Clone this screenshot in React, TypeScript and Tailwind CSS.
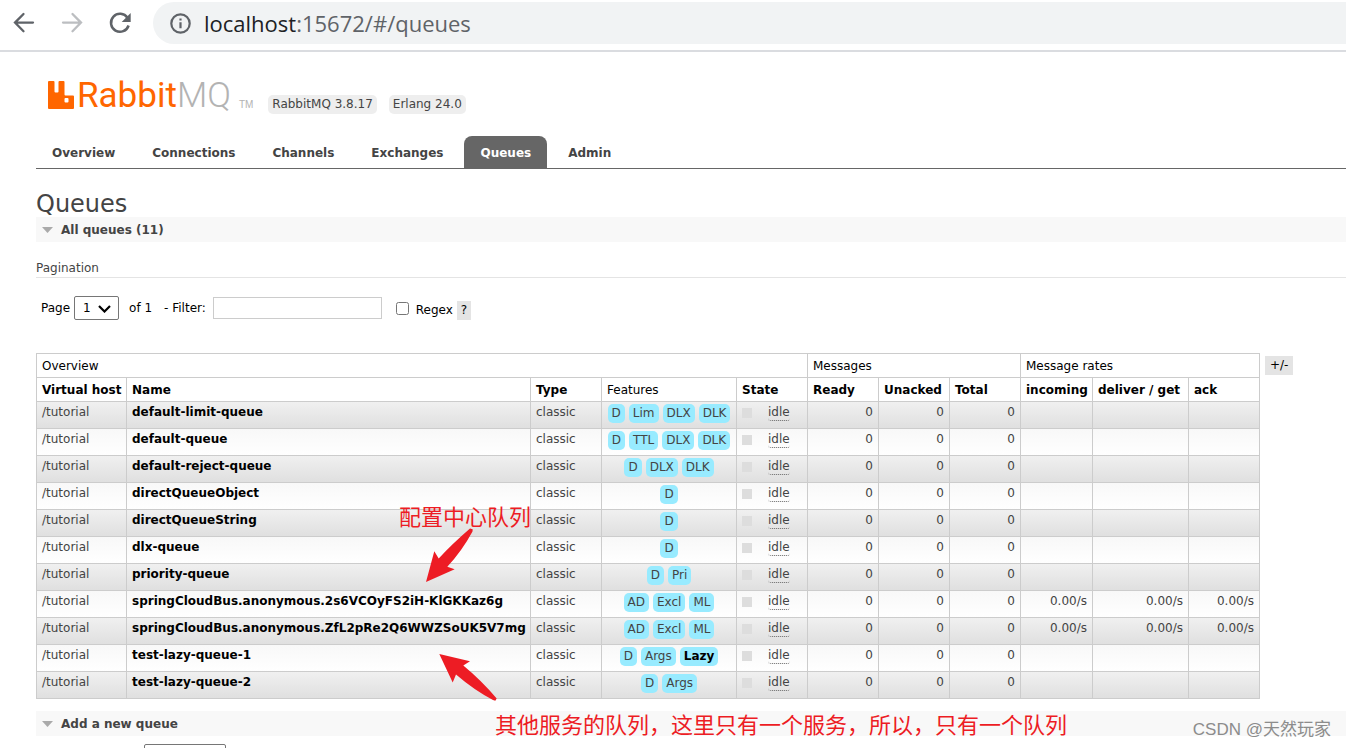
import { useState } from 'react'

interface Queue {
  name: string
  features: string[]
  rate?: string
}

const tabs = ['Overview', 'Connections', 'Channels', 'Exchanges', 'Queues', 'Admin']

const queues: Queue[] = [
  { name: 'default-limit-queue', features: ['D', 'Lim', 'DLX', 'DLK'] },
  { name: 'default-queue', features: ['D', 'TTL', 'DLX', 'DLK'] },
  { name: 'default-reject-queue', features: ['D', 'DLX', 'DLK'] },
  { name: 'directQueueObject', features: ['D'] },
  { name: 'directQueueString', features: ['D'] },
  { name: 'dlx-queue', features: ['D'] },
  { name: 'priority-queue', features: ['D', 'Pri'] },
  { name: 'springCloudBus.anonymous.2s6VCOyFS2iH-KlGKKaz6g', features: ['AD', 'Excl', 'ML'], rate: '0.00/s' },
  { name: 'springCloudBus.anonymous.ZfL2pRe2Q6WWZSoUK5V7mg', features: ['AD', 'Excl', 'ML'], rate: '0.00/s' },
  { name: 'test-lazy-queue-1', features: ['D', 'Args', 'Lazy'] },
  { name: 'test-lazy-queue-2', features: ['D', 'Args'] },
]

const headCell = 'h-6 border border-[#ccc] pr-1 pl-[5px] text-left align-middle leading-4 whitespace-nowrap text-black'
const baseCell = 'h-[27px] border border-[#ccc] pt-[2px] align-top leading-4 whitespace-nowrap'
const cell = `${baseCell} pr-1 pl-[5px]`
const featureCell = `${baseCell} px-[5px]`
const numberCell = `${baseCell} px-[5px] text-right`

function BrowserBar() {
  return (
    <div className="flex h-[52px] shrink-0 items-start border-b-2 border-[#dadce0] pt-0.5 pl-[9px]">
      <div className="flex h-[42px] shrink-0 items-center gap-[18px] pr-[18px] text-[#5f6368]">
        <button type="button" aria-label="Back">
          <svg width="30" height="30" viewBox="0 0 30 30" fill="none" stroke="currentColor" strokeWidth="2.3" strokeLinecap="round">
            <path d="M24 14.600H6.500M14.500 6L6 14.600L14.500 23.200" />
          </svg>
        </button>
        <button type="button" aria-label="Forward" className="text-[#bcbec1]">
          <svg width="30" height="30" viewBox="0 0 30 30" fill="none" stroke="currentColor" strokeWidth="2.3" strokeLinecap="round">
            <path d="M6 14.600H23.500M15.500 6L24 14.600L15.500 23.200" />
          </svg>
        </button>
        <button type="button" aria-label="Reload">
          <svg width="30" height="30" viewBox="0 0 30 30" fill="none">
            <path d="M22.500 9.800A9 9 0 1 0 23.600 17.500" stroke="currentColor" strokeWidth="2.5" />
            <path d="M25.700 5V14H16.700z" fill="currentColor" />
          </svg>
        </button>
      </div>
      <div className="flex h-[42px] flex-1 items-center gap-[13px] rounded-l-full bg-[#f1f3f4] pl-[17px]">
        <svg width="21" height="21" viewBox="0 0 21 21" fill="none">
          <circle cx="10.5" cy="10.5" r="9.2" stroke="#5f6368" strokeWidth="2.2" />
          <path d="M10.500 9.300v6M10.500 5.400v2.200" stroke="#5f6368" strokeWidth="2.2" />
        </svg>
        <span className="font-['Open_Sans',sans-serif] text-[22px] leading-[30px] text-[#5f6368]">
          <span className="text-[#202124]">localhost</span>:15672/#/queues
        </span>
      </div>
    </div>
  )
}

function Logo() {
  return (
    <a href="#/" className="flex items-end pr-[3px]">
      <svg width="26" height="28" viewBox="0 0 26 28" className="mb-[5px]">
        <path
          d="M1 0h4.500q1 0 1 1v9.500q0 1 1 1h2q1 0 1-1V1q0-1 1-1h4q1 0 1 1v12.500q0 1 1 1H25q1 0 1 1v11.500q0 1-1 1H1q-1 0-1-1V1q0-1 1-1zM16.500 18v2.500q0 1 1 1h2q1 0 1-1v-2.500q0-1-1-1h-2q-1 0-1 1z"
          fill="#f60"
          fillRule="evenodd"
        />
      </svg>
      <span className="pl-[3px] font-[Roboto,sans-serif] text-[35px] leading-9 text-[#f60]">
        Rabbit<span className="font-light text-[#b3b3b3]">MQ</span>
      </span>
      <span className="mb-[3px] pl-2 font-['Liberation_Sans',sans-serif] text-[10px] leading-3 text-[#b3b3b3]">TM</span>
    </a>
  )
}

function SectionBar({ title }: { title: string }) {
  return (
    <h2 className="bg-[#f8f8f8] font-bold">
      <button type="button" className="flex h-[25px] w-full items-center gap-2 pl-[6px] text-left">
        <svg width="11" height="6" viewBox="0 0 11 6">
          <path d="M0 0h11L5.500 6z" fill="#aaa" />
        </svg>
        {title}
      </button>
    </h2>
  )
}

function Pagination() {
  const [filter, setFilter] = useState('')
  const [regex, setRegex] = useState(false)

  return (
    <div className="mt-[18px] flex h-6 items-center pl-[5px] text-black">
      <label htmlFor="page">Page</label>
      <div className="relative ml-1">
        <select id="page" className="h-6 w-[45px] appearance-none rounded-[2px] border border-[#767676] bg-white pl-2">
          <option>1</option>
        </select>
        <svg className="pointer-events-none absolute top-[9px] right-[8px]" width="13" height="8" viewBox="0 0 13 8" fill="none">
          <path d="M1 1l5.500 5.500L12 1" stroke="#000" strokeWidth="2.2" />
        </svg>
      </div>
      <span className="ml-[10px]">of 1</span>
      <label htmlFor="filter" className="ml-3">- Filter:</label>
      <input
        id="filter"
        type="text"
        value={filter}
        onChange={(e) => setFilter(e.target.value)}
        className="ml-[7px] h-[22px] w-[169px] border border-[#ccc] px-1"
      />
      <input
        id="regex"
        type="checkbox"
        checked={regex}
        onChange={(e) => setRegex(e.target.checked)}
        className="ml-[14px] size-[13px]"
      />
      <label htmlFor="regex" className="mt-1 ml-[7px]">Regex</label>
      <button type="button" className="mt-1 ml-1 h-[19px] bg-[#e4e4e4] px-1 leading-[19px]">?</button>
    </div>
  )
}

function QueueTable() {
  return (
    <table className="border-collapse">
      <colgroup>
        <col className="w-[90px]" />
        <col className="w-[404px]" />
        <col className="w-[71px]" />
        <col className="w-[135px]" />
        <col className="w-[71px]" />
        <col className="w-[71px]" />
        <col className="w-[71px]" />
        <col className="w-[71px]" />
        <col className="w-[72px]" />
        <col className="w-[96px]" />
        <col className="w-[71px]" />
      </colgroup>
      <thead>
        <tr>
          <th colSpan={5} className={`${headCell} font-normal`}>Overview</th>
          <th colSpan={3} className={`${headCell} font-normal`}>Messages</th>
          <th colSpan={3} className={`${headCell} font-normal`}>Message rates</th>
        </tr>
        <tr>
          <th className={headCell}>Virtual host</th>
          <th className={headCell}>Name</th>
          <th className={headCell}>Type</th>
          <th className={`${headCell} font-normal`}>Features</th>
          <th className={headCell}>State</th>
          <th className={headCell}>Ready</th>
          <th className={headCell}>Unacked</th>
          <th className={headCell}>Total</th>
          <th className={headCell}>incoming</th>
          <th className={headCell}>deliver / get</th>
          <th className={headCell}>ack</th>
        </tr>
      </thead>
      <tbody>
        {queues.map((queue) => (
          <tr
            key={queue.name}
            className="bg-linear-to-b odd:from-[#f0f0f0] odd:to-[#dfdfdf] even:from-[#f8f8f8] even:to-white"
          >
            <td className={cell}>/tutorial</td>
            <td className={cell}>
              <a href="#/queues" className="font-bold text-black">{queue.name}</a>
            </td>
            <td className={cell}>classic</td>
            <td className={featureCell}>
              <div className="flex justify-center gap-1">
                {queue.features.map((feature) => (
                  <span
                    key={feature}
                    className={`rounded-[5px] bg-[#98ebff] px-1 leading-[19px] ${feature === 'Lazy' ? 'font-bold text-black' : ''}`}
                  >
                    {feature}
                  </span>
                ))}
              </div>
            </td>
            <td className={cell}>
              <div className="flex items-center gap-4">
                <span className="size-[10px] bg-[#ddd]" />
                <span className="rounded-[3px] border-b border-dotted border-[#666]">idle</span>
              </div>
            </td>
            <td className={numberCell}>0</td>
            <td className={numberCell}>0</td>
            <td className={numberCell}>0</td>
            <td className={numberCell}>{queue.rate}</td>
            <td className={numberCell}>{queue.rate}</td>
            <td className={numberCell}>{queue.rate}</td>
          </tr>
        ))}
      </tbody>
    </table>
  )
}

// Red notes and arrows that sit on top of the table
function Annotations() {
  return (
    <div className="pointer-events-none absolute inset-0 font-['Noto_Sans_CJK_SC',sans-serif] text-[22px] leading-8 whitespace-nowrap text-[#ed1c24]">
      <p className="absolute top-[499px] left-[399px]">配置中心队列</p>
      <svg className="absolute top-[526px] left-[424px]" width="50" height="58" viewBox="424 526 50 58" fill="#ed1c24">
        <path d="M426 582L434.300 551.300L438.700 558.500Q452 544 470 528.500L472.700 529.300L472.500 531.500Q462 551 447.300 566.700L454.700 569.300Z" />
      </svg>
      <svg className="absolute top-[652px] left-[437px]" width="62" height="51" viewBox="437 652 62 51" fill="#ed1c24">
        <path d="M439.300 654L470 661.300L463.300 665.500Q481 680 496.700 698.500L495.300 700.700L493 700Q474 690 456 674.500L452.700 682.500Z" />
      </svg>
      <p className="absolute top-[707px] left-[495px]">其他服务的队列，这里只有一个服务，所以，只有一个队列</p>
    </div>
  )
}

export default function App() {
  return (
    <div className="relative flex h-screen flex-col overflow-hidden bg-white font-['DejaVu_Sans',Verdana,sans-serif] text-xs text-[#444]">
      <BrowserBar />
      <main className="flex-1 overflow-hidden pl-9">
        <header className="flex h-[84px] items-end gap-3 pb-[22px] pl-3">
          <Logo />
          <span className="rounded-[5px] bg-[#eee] px-1 leading-[19px]">RabbitMQ 3.8.17</span>
          <span className="rounded-[5px] bg-[#eee] px-1 leading-[19px]">Erlang 24.0</span>
        </header>
        <nav className="flex gap-[5px] border-b border-[#666]">
          {tabs.map((tab) => (
            <a
              key={tab}
              href={`#/${tab.toLowerCase()}`}
              className={`h-8 rounded-t-lg px-4 leading-[34px] font-bold ${tab === 'Queues' ? 'bg-[#666] text-white' : ''}`}
            >
              {tab}
            </a>
          ))}
        </nav>
        <h1 className="mt-[22px] text-2xl leading-[26px]">Queues</h1>
        <SectionBar title="All queues (11)" />
        <h3 className="mt-[18px] border-b border-[#e4e4e4] leading-[17px]">Pagination</h3>
        <Pagination />
        <div className="mt-[33px] flex items-start gap-[5px]">
          <QueueTable />
          <button type="button" className="mt-[3px] h-[19px] bg-[#e4e4e4] px-[5px] leading-[19px] text-black">+/-</button>
        </div>
        <div className="mt-3">
          <SectionBar title="Add a new queue" />
          <div className="mt-2 pl-[108px]">
            <select aria-label="Type" className="h-6 w-[82px] appearance-none rounded-[2px] border border-[#767676] bg-white pl-2">
              <option>Classic</option>
            </select>
          </div>
        </div>
      </main>
      <Annotations />
      <p className="pointer-events-none absolute right-[15px] bottom-[6px] font-['Liberation_Sans','Noto_Sans_CJK_SC',sans-serif] text-[17px] leading-6 text-[#8c8c8c]">
        CSDN @天然玩家
      </p>
    </div>
  )
}
